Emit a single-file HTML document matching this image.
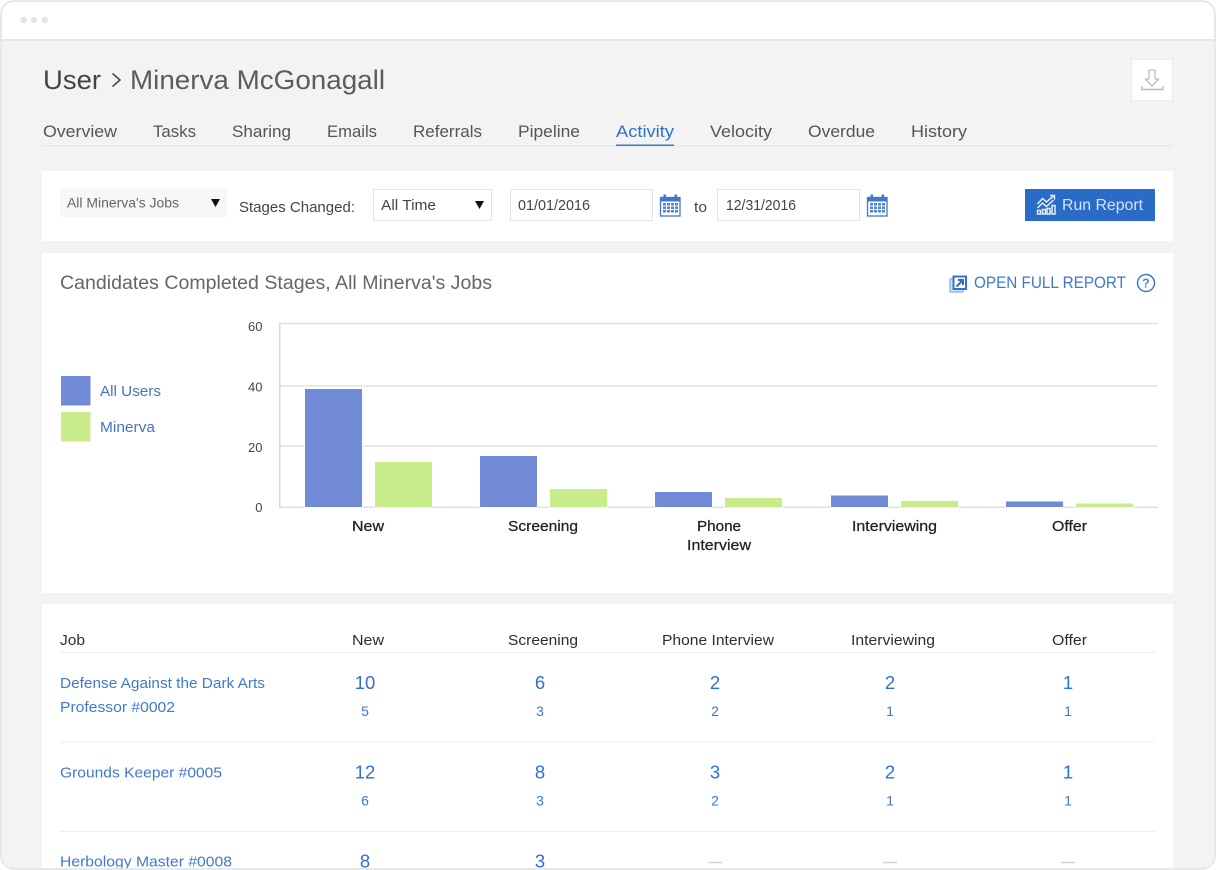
<!DOCTYPE html>
<html><head><meta charset="utf-8"><title>User Activity</title>
<style>
html,body{margin:0;padding:0;background:#fff;width:1216px;height:870px;overflow:hidden}
svg{display:block}
text{font-family:"Liberation Sans",Arial,sans-serif}
</style></head><body>
<svg xmlns="http://www.w3.org/2000/svg" width="1216" height="870" viewBox="0 0 1216 870">
<defs><clipPath id="c"><rect x="1" y="1" width="1214" height="868" rx="13"/></clipPath></defs>
<g clip-path="url(#c)">
<rect width="1216" height="870" fill="#f3f3f3"/>
<rect width="1216" height="39" fill="#fff"/>
<rect y="39" width="1216" height="2" fill="#e8e8e8"/>
<circle cx="23.500" cy="20" r="3.200" fill="#e4e4e4"/><circle cx="34" cy="20" r="3.200" fill="#e4e4e4"/><circle cx="45" cy="20" r="3.200" fill="#e4e4e4"/>

<text x="43" y="89" font-size="27" fill="#444" textLength="58" lengthAdjust="spacingAndGlyphs">User</text>
<path d="M112.500 73.500l7.500 6.500-7.500 6.500" fill="none" stroke="#444" stroke-width="1.500"/>
<text x="130" y="89" font-size="27" fill="#5c5c5c" textLength="255" lengthAdjust="spacingAndGlyphs">Minerva McGonagall</text>

<g font-size="17" fill="#555">
<text x="43" y="137" textLength="74" lengthAdjust="spacingAndGlyphs">Overview</text>
<text x="153" y="137" textLength="43" lengthAdjust="spacingAndGlyphs">Tasks</text>
<text x="232" y="137" textLength="59" lengthAdjust="spacingAndGlyphs">Sharing</text>
<text x="327" y="137" textLength="50" lengthAdjust="spacingAndGlyphs">Emails</text>
<text x="413" y="137" textLength="69" lengthAdjust="spacingAndGlyphs">Referrals</text>
<text x="518" y="137" textLength="62" lengthAdjust="spacingAndGlyphs">Pipeline</text>
<text x="616" y="137" textLength="58" lengthAdjust="spacingAndGlyphs" fill="#2f70c9">Activity</text>
<text x="710" y="137" textLength="62" lengthAdjust="spacingAndGlyphs">Velocity</text>
<text x="808" y="137" textLength="67" lengthAdjust="spacingAndGlyphs">Overdue</text>
<text x="911" y="137" textLength="56" lengthAdjust="spacingAndGlyphs">History</text>
</g>
<rect x="42" y="145" width="1131" height="1.500" fill="#e8e8e8"/>
<rect x="616" y="144.500" width="58" height="1.500" fill="#3a7ad2"/>

<rect x="1131.500" y="59.500" width="41" height="41" fill="#fff" stroke="#ececec"/>
<path d="M1149 70h6v9h3.500l-6.500 7-6.500-7h3.500z" fill="none" stroke="#bdbdbd" stroke-width="1.300"/>
<path d="M1142 86v3.500h21v-3.500" fill="none" stroke="#bdbdbd" stroke-width="1.500"/>

<!-- filter -->
<rect x="42" y="171" width="1131" height="70" fill="#fff"/>
<rect x="60" y="189" width="167" height="28" fill="#f7f7f7"/>
<text x="67" y="207.500" font-size="13.500" fill="#666" textLength="112" lengthAdjust="spacingAndGlyphs">All Minerva's Jobs</text>
<path d="M211 199h9l-4.500 8z" fill="#111"/>
<text x="239" y="212" font-size="15" fill="#444" textLength="116" lengthAdjust="spacingAndGlyphs">Stages Changed:</text>
<rect x="373.500" y="189.500" width="118" height="31" fill="#fff" stroke="#e3e3e3"/>
<text x="381" y="210" font-size="15" fill="#444" textLength="55" lengthAdjust="spacingAndGlyphs">All Time</text>
<path d="M475 201h9l-4.500 8z" fill="#111"/>
<rect x="510.500" y="189.500" width="142" height="31" fill="#fff" stroke="#e3e3e3"/>
<text x="518" y="210" font-size="15" fill="#444" textLength="72" lengthAdjust="spacingAndGlyphs">01/01/2016</text>
<text x="694" y="212" font-size="15" fill="#444" textLength="13" lengthAdjust="spacingAndGlyphs">to</text>
<rect x="717.500" y="189.500" width="142" height="31" fill="#fff" stroke="#e3e3e3"/>
<text x="726" y="210" font-size="15" fill="#444" textLength="70" lengthAdjust="spacingAndGlyphs">12/31/2016</text>

<g>
<rect x="660.500" y="197.500" width="19.500" height="18.500" fill="#fff" stroke="#3f78cc" stroke-width="1.300"/>
<rect x="660.500" y="197" width="19.500" height="4.500" fill="#3f78cc"/>
<rect x="663.500" y="194.500" width="2.500" height="4.500" fill="#3f78cc"/><rect x="674.500" y="194.500" width="2.500" height="4.500" fill="#3f78cc"/>
<path d="M663 203h3v2.500H663zM667 203h3v2.500H667zM671 203h3v2.500H671zM675 203h3v2.500H675zM663 206.500h3v2.500H663zM667 206.500h3v2.500H667zM671 206.500h3v2.500H671zM675 206.500h3v2.500H675zM663 210h3v2.500H663zM667 210h3v2.500H667zM671 210h3v2.500H671zM675 210h3v2.500H675z" fill="#4f85d3"/>
</g>
<g transform="translate(207 0)">
<rect x="660.500" y="197.500" width="19.500" height="18.500" fill="#fff" stroke="#3f78cc" stroke-width="1.300"/>
<rect x="660.500" y="197" width="19.500" height="4.500" fill="#3f78cc"/>
<rect x="663.500" y="194.500" width="2.500" height="4.500" fill="#3f78cc"/><rect x="674.500" y="194.500" width="2.500" height="4.500" fill="#3f78cc"/>
<path d="M663 203h3v2.500H663zM667 203h3v2.500H667zM671 203h3v2.500H671zM675 203h3v2.500H675zM663 206.500h3v2.500H663zM667 206.500h3v2.500H667zM671 206.500h3v2.500H671zM675 206.500h3v2.500H675zM663 210h3v2.500H663zM667 210h3v2.500H667zM671 210h3v2.500H671zM675 210h3v2.500H675z" fill="#4f85d3"/>
</g>

<rect x="1025" y="189" width="130" height="32" fill="#2a6bc7"/>
<text x="1062" y="210" font-size="16" fill="#d5e3f6" textLength="81" lengthAdjust="spacingAndGlyphs">Run Report</text>
<g fill="none" stroke="#e4edf9" stroke-width="1.500">
<path d="M1037.500 204l5-5.500 4 3.500 7-6"/><path d="M1037.500 208l5-5 4 3.500 7-6.500"/><path d="M1050 195.500h4.500v4"/>
<rect x="1037.500" y="210.500" width="3" height="3.500"/><rect x="1042.500" y="209.500" width="3" height="4.500"/><rect x="1047" y="208.500" width="3" height="5.500"/><rect x="1052" y="205.500" width="3" height="8.500"/>
</g>

<!-- chart card -->
<rect x="42" y="253" width="1131" height="340" fill="#fff"/>
<text x="60" y="289" font-size="19" fill="#666" textLength="432" lengthAdjust="spacingAndGlyphs">Candidates Completed Stages, All Minerva's Jobs</text>
<rect x="950" y="279" width="13" height="13" fill="#cfe0f5" stroke="#8fb2e4" stroke-width="1.300"/>
<rect x="953.500" y="276.500" width="12.500" height="12.500" fill="#fff" stroke="#3273cc" stroke-width="2"/>
<path d="M956.500 286.500l6-6M958 280h5v5" fill="none" stroke="#2a6bc7" stroke-width="2"/>
<text x="974" y="288" font-size="16.500" fill="#3f78cc" textLength="152" lengthAdjust="spacingAndGlyphs">OPEN FULL REPORT</text>
<circle cx="1146" cy="283" r="8.500" fill="none" stroke="#3f78cc" stroke-width="1.500"/>
<text x="1146" y="287.500" font-size="12.500" font-weight="bold" fill="#4f85d3" text-anchor="middle">?</text>

<g font-size="13" fill="#444" text-anchor="end">
<text x="262.500" y="331">60</text><text x="262.500" y="391.500">40</text><text x="262.500" y="452">20</text><text x="262.500" y="512">0</text>
</g>
<path d="M279.500 323.500H1158M280 386H1158M280 446H1158" stroke="#dcdcdc" stroke-width="1.200" fill="none"/>
<rect x="279" y="323" width="1.500" height="184" fill="#d9d9d9"/>
<rect x="279" y="506.500" width="879" height="1.500" fill="#d8e1ea"/>
<g stroke="#fff" stroke-width="1.500" paint-order="stroke">
<rect x="305" y="389" width="57" height="118" fill="#718bd7"/>
<rect x="375" y="462" width="57" height="45" fill="#c8ec89"/>
<rect x="480" y="456" width="57" height="51" fill="#718bd7"/>
<rect x="550" y="489" width="57" height="18" fill="#c8ec89"/>
<rect x="655" y="492" width="57" height="15" fill="#718bd7"/>
<rect x="725" y="498" width="57" height="9" fill="#c8ec89"/>
<rect x="831" y="495.500" width="57" height="11.500" fill="#718bd7"/>
<rect x="901" y="501" width="57" height="6" fill="#c8ec89"/>
<rect x="1006" y="501.500" width="57" height="5.500" fill="#718bd7"/>
<rect x="1076" y="503.500" width="57" height="3.500" fill="#c8ec89"/>
</g>
<g font-size="14.500" fill="#222" stroke="#222" stroke-width=".25">
<text x="352" y="531" textLength="32" lengthAdjust="spacingAndGlyphs">New</text>
<text x="508" y="531" textLength="70" lengthAdjust="spacingAndGlyphs">Screening</text>
<text x="697" y="531" textLength="44" lengthAdjust="spacingAndGlyphs">Phone</text>
<text x="687" y="550" textLength="64" lengthAdjust="spacingAndGlyphs">Interview</text>
<text x="852" y="531" textLength="85" lengthAdjust="spacingAndGlyphs">Interviewing</text>
<text x="1052" y="531" textLength="35" lengthAdjust="spacingAndGlyphs">Offer</text>
</g>
<rect x="61" y="376" width="29.500" height="29.500" fill="#718bd7"/>
<rect x="61" y="412" width="29.500" height="29.500" fill="#c8ec89"/>
<text x="100" y="396" font-size="14.500" fill="#4a72c4" textLength="61" lengthAdjust="spacingAndGlyphs">All Users</text>
<text x="100" y="432" font-size="14.500" fill="#4a72c4" textLength="55" lengthAdjust="spacingAndGlyphs">Minerva</text>

<!-- table card -->
<rect x="42" y="604" width="1131" height="270" fill="#fff"/>
<g font-size="14.500" fill="#2e2e2e">
<text x="60" y="645" textLength="25" lengthAdjust="spacingAndGlyphs">Job</text>
<text x="352" y="645" textLength="32" lengthAdjust="spacingAndGlyphs">New</text>
<text x="508" y="645" textLength="70" lengthAdjust="spacingAndGlyphs">Screening</text>
<text x="662" y="645" textLength="112" lengthAdjust="spacingAndGlyphs">Phone Interview</text>
<text x="851" y="645" textLength="84" lengthAdjust="spacingAndGlyphs">Interviewing</text>
<text x="1052" y="645" textLength="35" lengthAdjust="spacingAndGlyphs">Offer</text>
</g>
<path d="M60 652.500H1155M60 742H1155M60 831.500H1155" stroke="#eeeeee" stroke-width="1"/>
<g font-size="15" fill="#4279cd">
<text x="60" y="688" textLength="205" lengthAdjust="spacingAndGlyphs">Defense Against the Dark Arts</text>
<text x="60" y="712" textLength="115" lengthAdjust="spacingAndGlyphs">Professor #0002</text>
<text x="60" y="777.500" textLength="162" lengthAdjust="spacingAndGlyphs">Grounds Keeper #0005</text>
<text x="60" y="866.500" textLength="172" lengthAdjust="spacingAndGlyphs">Herbology Master #0008</text>
</g>
<g font-size="18.500" fill="#2f70d0" text-anchor="middle">
<text x="365" y="689">10</text><text x="540" y="689">6</text><text x="715" y="689">2</text><text x="890" y="689">2</text><text x="1068" y="689">1</text>
<text x="365" y="778.500">12</text><text x="540" y="778.500">8</text><text x="715" y="778.500">3</text><text x="890" y="778.500">2</text><text x="1068" y="778.500">1</text>
<text x="365" y="867.500">8</text><text x="540" y="867.500">3</text>
</g>
<g font-size="14" fill="#3f78cc" text-anchor="middle">
<text x="365" y="716">5</text><text x="540" y="716">3</text><text x="715" y="716">2</text><text x="890" y="716">1</text><text x="1068" y="716">1</text>
<text x="365" y="805.500">6</text><text x="540" y="805.500">3</text><text x="715" y="805.500">2</text><text x="890" y="805.500">1</text><text x="1068" y="805.500">1</text>
</g>
<path d="M708 862.500h14M883 862.500h14M1061 862.500h14" stroke="#d4d4d4" stroke-width="1.500"/>
</g>
<rect x="1" y="1" width="1214" height="868" rx="13" fill="none" stroke="#e8e8e8" stroke-width="2"/>
</svg>
</body></html>
